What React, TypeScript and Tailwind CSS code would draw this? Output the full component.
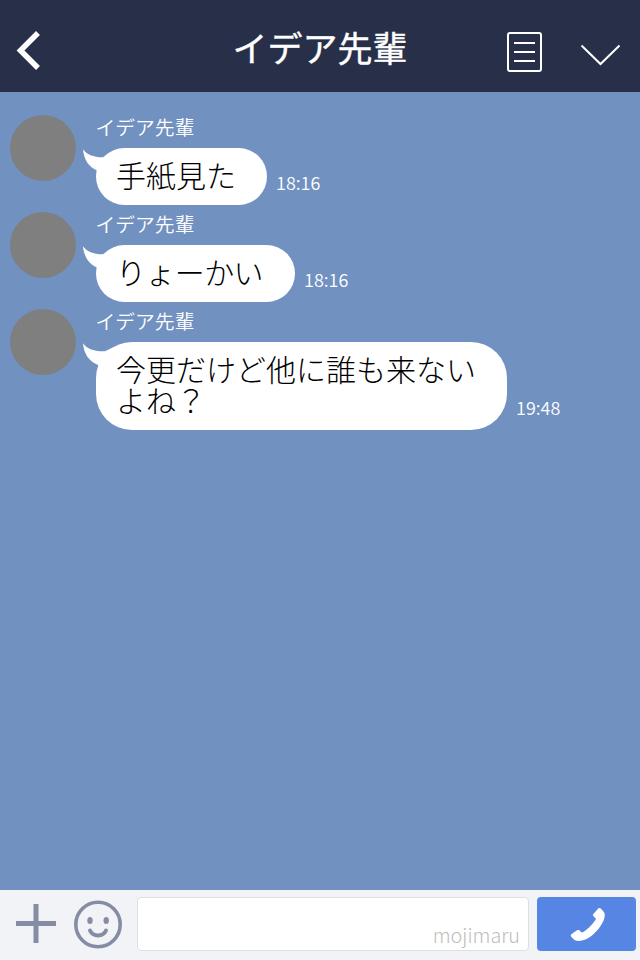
type Message = { text: string; time: string; shape: string };

const messages: Message[] = [
  { text: '手紙見た', time: '18:16', shape: 'w-[171px]' },
  { text: 'りょーかい', time: '18:16', shape: 'w-[199px] tracking-[-0.6px]' },
  { text: '今更だけど他に誰も来ない\nよね？', time: '19:48', shape: 'w-[411px]' },
];

function MessageRow({ text, time, shape }: Message) {
  return (
    <div className="flex items-start pl-[10px]">
      <div className="size-[66px] shrink-0 rounded-full bg-[#7f7f7f]" />
      <div className="ml-[19.5px]">
        <div className="h-[33px] pt-[2px] text-[19.8px] leading-[20px] font-[350] text-white">イデア先輩</div>
        <div className="ml-[0.5px] flex items-end">
          <div className={`relative rounded-[36px] bg-white pt-[11px] pb-[15px] pl-5 ${shape}`}>
            <svg className="absolute -left-[13px] top-0" width="40" height="40" viewBox="0 0 40 40" fill="#fff">
              <path d="M0 1.2C4 6.5 10 9.5 22 9.2L32 4.5V34L14 22.5C6 19 1 12 0 1.2Z" />
            </svg>
            <p className="relative text-[30px] leading-[31px] font-light whitespace-pre text-black">{text}</p>
          </div>
          <div className="ml-[9px] pb-[13px] text-[18px] leading-[20px] font-[350] text-white">{time}</div>
        </div>
      </div>
    </div>
  );
}

export default function App() {
  return (
    <div className="flex h-[960px] w-[640px] flex-col overflow-hidden bg-[#7191c1] font-['Noto_Sans_CJK_JP',sans-serif]">
      <header className="grid h-[92px] shrink-0 grid-cols-[160px_320px_160px] bg-[#273048]">
        <svg width="160" height="92" fill="none" stroke="#fff" strokeWidth="5.5">
          <path d="M38 33L20.5 50.5L38 68" />
        </svg>
        <h1 className="pt-[29px] text-center text-[35px] leading-[35px] font-normal text-white [-webkit-text-stroke:0.4px_white]">イデア先輩</h1>
        <svg width="160" height="92" fill="none" stroke="#fff" strokeWidth="2">
          <rect x="28" y="33" width="33" height="38" rx="2" />
          <path d="M34 43H55M34 52H55M34 61H55M101.5 45.5L120.5 64L139.5 45.5" />
        </svg>
      </header>

      <main className="flex flex-1 flex-col gap-[7px] pt-[23px]">
        {messages.map((m) => (
          <MessageRow key={m.text} {...m} />
        ))}
      </main>

      <footer className="flex h-[70px] shrink-0 items-start bg-[#f2f3f7] pt-[7px]">
        <svg width="137" height="56" fill="none" stroke="#858ca3">
          <path d="M16 26.5H56M36 7V46" strokeWidth="5" />
          <circle cx="98" cy="27.5" r="22.2" strokeWidth="3.6" />
          <path d="M90 33.5C93 40 103 40 106 33.5" strokeWidth="4" strokeLinecap="round" />
          <g fill="#858ca3" stroke="none">
            <ellipse cx="90" cy="23.5" rx="2.7" ry="3.6" />
            <ellipse cx="106.2" cy="23.5" rx="2.7" ry="3.6" />
          </g>
        </svg>
        <div className="flex h-[54px] w-[392px] items-end justify-end rounded-[4px] border border-[#dddfe4] bg-white pr-[8px] pb-[2px] text-[19.8px] leading-[26px] font-light text-[#bdbdbd]">
          mojimaru
        </div>
        <div className="ml-2 flex h-[54px] w-[99px] rounded-[4px] bg-[#5785e3]">
          <svg width="99" height="54" fill="#fff">
            <path d="M61.5 11.2Q62.7 10.5 63.8 11.5L66.3 14.3Q67.8 15.7 67.8 18C67.5 25 61.5 33 55 38.5C49.5 43 42 45.5 37.5 42.9L34.2 39.8Q33.2 38.3 34.3 37.3L40 33.3Q41.2 32.5 42.3 33.3L44.8 35.6C48 34.6 57.5 26 59 21.7L56.5 19.3Q55.4 18.3 56.3 17.1Z" />
          </svg>
        </div>
      </footer>
    </div>
  );
}
